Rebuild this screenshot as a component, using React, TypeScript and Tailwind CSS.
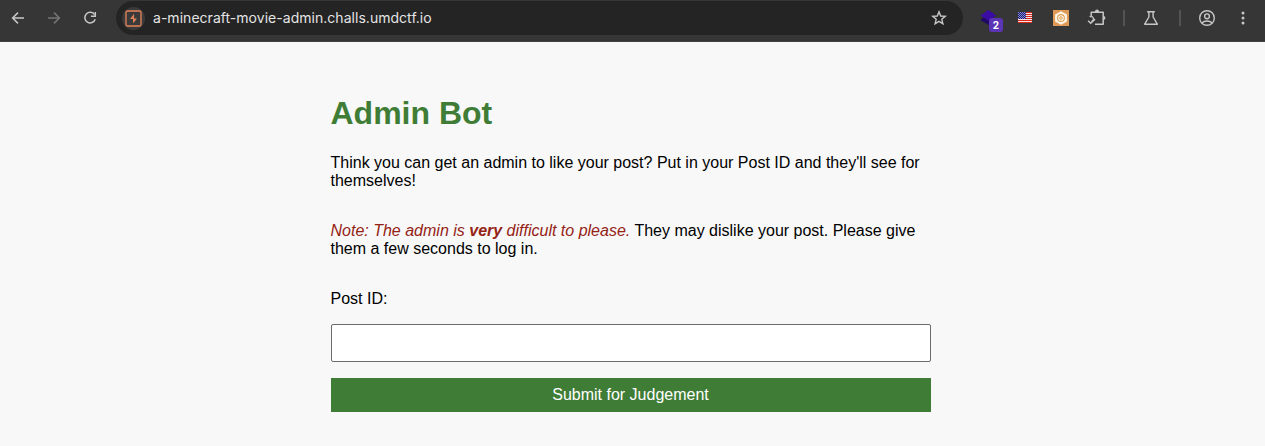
import type { ReactNode } from "react";

function Slot({ children, label }: { children: ReactNode; label: string }) {
  return (
    <button aria-label={label} className="flex h-9 w-9 shrink-0 items-center justify-center">
      {children}
    </button>
  );
}

function BackArrow({ className }: { className: string }) {
  return (
    <svg viewBox="0 0 16 16" className={className} fill="none" stroke="currentColor" strokeWidth="1.5">
      <path d="M14 8H3M8 2.6 2.6 8 8 13.4" />
    </svg>
  );
}

function Reload() {
  return (
    <svg viewBox="0 0 16 16" className="h-4 w-4 text-[#c7c7c7]" fill="none" stroke="currentColor" strokeWidth="1.5">
      <path d="M12.6 4.7A5.3 5.3 0 1 0 13.2 9.2" />
      <path d="M13.3 1.9v4.4H8.9" />
    </svg>
  );
}

function SiteBadge() {
  return (
    <span className="flex h-[23px] w-[23px] shrink-0 items-center justify-center rounded-full bg-[#3a3a3a]">
      <svg viewBox="0 0 17 17" className="h-[17px] w-[17px]" fill="none" stroke="#e8845a">
        <rect x="1" y="1" width="15" height="15" rx="1.5" strokeWidth="1.3" />
        <path d="M9 4 5 9h3.200v-2zM8.400 13l3.600-4.600H8.400z" fill="#e8845a" stroke="none" />
        <path d="M8.600 4.500v8" strokeWidth="1" />
      </svg>
    </span>
  );
}

function Star() {
  return (
    <svg viewBox="0 0 16 16" className="h-4 w-4 text-[#c7c7c7]" fill="none" stroke="currentColor" strokeWidth="1.4">
      <path d="M8 1.8 9.7 6l4.6.3-3.5 3 1.1 4.5L8 11.4l-3.9 2.4 1.1-4.5-3.5-3L6.3 6Z" />
    </svg>
  );
}

function Layers() {
  return (
    <span className="relative block h-4 w-4">
      <svg viewBox="0 0 16 16" className="h-4 w-4">
        <path d="M1 9 8 5 16 9V11L9 15 1 10.5Z" fill="#1f0a66" />
        <path d="M8.500 0 16.500 5.500 8.500 10.500 .5 5.500Z" fill="#3a0ca3" />
      </svg>
      <span className="absolute top-2 left-[9px] flex h-[14px] w-[14px] items-center justify-center rounded-[3px] bg-[#5b35b5] font-['Inter',sans-serif] text-[10px] leading-none font-bold text-white">
        2
      </span>
    </span>
  );
}

const STRIPES = [0, 2, 4, 6, 8, 10];
const STARS = [0, 1, 2, 3, 4, 5, 6].flatMap((row) => [0, 2, 4, 6].map((col) => ({ x: col + (row % 2), y: row })));

function Flag() {
  return (
    <svg viewBox="0 0 14 11" className="mb-px h-[11px] w-[14px]">
      <rect width="14" height="11" fill="#ffffff" />
      {STRIPES.map((y) => (
        <rect key={y} x="0" y={y} width="14" height="1.15" fill="#d8281c" />
      ))}
      <rect width="8" height="7" fill="#1c1c80" />
      {STARS.map((s) => (
        <rect key={`${s.x}-${s.y}`} x={s.x} y={s.y} width="1" height="1" fill="#858bc6" />
      ))}
    </svg>
  );
}

function HexIcon() {
  return (
    <svg viewBox="0 0 16 16" className="h-4 w-4">
      <rect width="16" height="16" fill="#e09a58" />
      <path d="m8 1.2 5.9 3.4v6.8L8 14.8l-5.9-3.4V4.6Z" fill="#fff5e9" />
      <circle cx="8" cy="8" r="3.4" fill="none" stroke="#dda258" strokeWidth="1.1" />
      <circle cx="8" cy="8" r="1.3" fill="none" stroke="#dda258" />
    </svg>
  );
}

function Puzzle() {
  return (
    <svg viewBox="0 0 20 18" className="h-[18px] w-5 text-[#c7c7c7]" fill="none" stroke="currentColor" strokeWidth="1.5">
      <path d="M4.2 7.2V3.3h12v12H8" strokeLinejoin="round" />
      <path d="M8 3v-.5a2 2 0 0 1 4 0V3ZM16 7h.5a1.8 1.8 0 0 1 0 3.8H16Z" fill="currentColor" stroke="none" />
      <path d="M2.6 7.7h2a2 2 0 0 1 1.8 2.2c0 1.2-.8 2.1-1.9 2.5" strokeWidth="1.3" />
      <path d="m1.1 11.7 2.6 2.5 4.3-4.1" />
    </svg>
  );
}

function Flask() {
  return (
    <svg viewBox="0 0 16 16" className="h-4 w-4 text-[#c7c7c7]" fill="none" stroke="currentColor" strokeWidth="1.4">
      <path d="M4.1 1.8h7.8M5.9 2v5L1.7 14.2h12.6L10.1 7V2" strokeLinejoin="round" />
    </svg>
  );
}

function Profile() {
  return (
    <svg viewBox="0 0 18 18" className="h-[18px] w-[18px] text-[#c7c7c7]" fill="none" stroke="currentColor" strokeWidth="1.4">
      <circle cx="9" cy="9" r="7.3" />
      <circle cx="9" cy="7.3" r="2.4" />
      <path d="M3.8 14c1.3-1.3 3-2 5.2-2s3.9.7 5.2 2" />
    </svg>
  );
}

function Dots() {
  return (
    <svg viewBox="0 0 4 16" className="h-4 w-1 text-[#c7c7c7]" fill="currentColor">
      <circle cx="2" cy="3" r="1.5" />
      <circle cx="2" cy="8" r="1.5" />
      <circle cx="2" cy="13" r="1.5" />
    </svg>
  );
}

function Toolbar() {
  return (
    <header className="flex h-[42px] items-start border-b border-[#414141] bg-[#363636]">
      <Slot label="Back"><BackArrow className="h-4 w-4 text-[#c7c7c7]" /></Slot>
      <Slot label="Forward"><BackArrow className="h-4 w-4 rotate-180 text-[#757575]" /></Slot>
      <Slot label="Reload"><Reload /></Slot>
      <div className="mt-px mr-[7px] ml-2 flex h-[34px] flex-1 items-center rounded-full bg-[#242424] pr-[6px] pl-[6px]">
        <SiteBadge />
        <span className="ml-2 flex-1 font-['Inter',sans-serif] text-[14px] leading-5 tracking-[0.03px] whitespace-nowrap text-[#e3e3e3]">
          a-minecraft-movie-admin.challs.umdctf.io
        </span>
        <Slot label="Bookmark"><Star /></Slot>
      </div>
      <Slot label="Layers"><Layers /></Slot>
      <div className="ml-px flex"><Slot label="Region"><Flag /></Slot></div>
      <Slot label="Hex"><HexIcon /></Slot>
      <Slot label="Extensions"><Puzzle /></Slot>
      <span className="mx-2 mt-[10px] h-4 w-[2px] bg-[#535353]" />
      <Slot label="Labs"><Flask /></Slot>
      <span className="mt-[10px] mr-2 ml-[10px] h-4 w-[2px] bg-[#535353]" />
      <Slot label="Profile"><Profile /></Slot>
      <Slot label="Menu"><Dots /></Slot>
      <span className="w-1" />
    </header>
  );
}

export default function App() {
  return (
    <div className="h-[446px] overflow-hidden bg-[#f8f8f8] font-['Liberation_Sans',Arial,sans-serif] text-base leading-[18px] text-black">
      <Toolbar />
      <main className="ml-[330.5px] w-[600px] pt-[53px]">
        <h1 className="text-[32px] leading-[37px] font-bold text-[#3f7d37]">Admin Bot</h1>
        <p className="mt-[22px]">
          Think you can get an admin to like your post? Put in your Post ID and they'll see for themselves!
        </p>
        <p className="mt-8">
          <em className="text-[#952315]">
            Note: The admin is <b>very</b> difficult to please.
          </em>{" "}
          They may dislike your post. Please give them a few seconds to log in.
        </p>
        <form className="mt-8 flex flex-col" onSubmit={(e) => e.preventDefault()}>
          <label htmlFor="post-id">Post ID:</label>
          <input id="post-id" className="mt-4 h-[38px] rounded-[2px] border border-[#6b6b6b] bg-white px-2 outline-none" />
          <button className="mt-4 h-[34px] bg-[#3f7d37] text-white">Submit for Judgement</button>
        </form>
      </main>
    </div>
  );
}
